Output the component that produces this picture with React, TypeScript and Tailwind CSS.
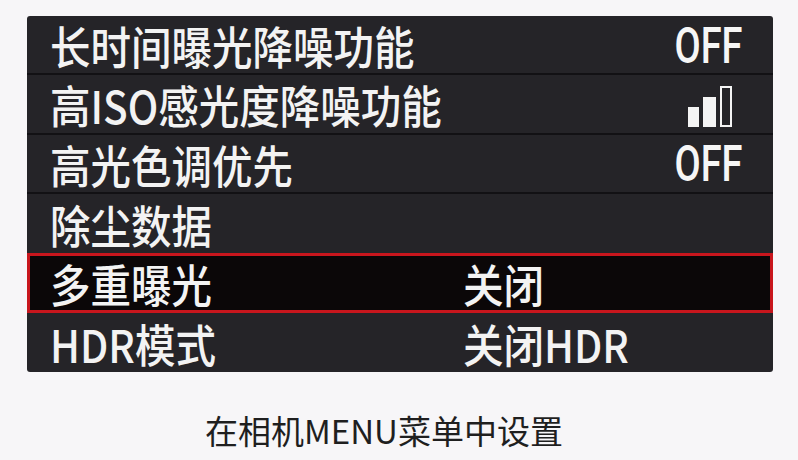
type Row = {
  label: string;
  value?: string;
  kind?: "off" | "text" | "level";
  selected?: boolean;
};

const rows: Row[] = [
  { label: "长时间曝光降噪功能", value: "OFF", kind: "off" },
  { label: "高ISO感光度降噪功能", kind: "level" },
  { label: "高光色调优先", value: "OFF", kind: "off" },
  { label: "除尘数据" },
  { label: "多重曝光", value: "关闭", kind: "text", selected: true },
  { label: "HDR模式", value: "关闭HDR", kind: "text" },
];

const cjk = { fontFamily: '"Noto Sans CJK SC", "Noto Sans", sans-serif' };

function LevelBars() {
  // two filled bars and one empty outline, like the camera's strength meter
  return (
    <div className="flex items-end gap-[4px] h-[41px]">
      <div className="w-[11px] h-[20px] bg-[#f4f4f4]" />
      <div className="w-[13px] h-[30px] bg-[#f4f4f4]" />
      <div className="w-[12px] h-[41px] border-2 border-[#f4f4f4]" />
    </div>
  );
}

function MenuRow({ row, last }: { row: Row; last: boolean }) {
  const base = row.selected
    ? "border-[3px] border-[#c8161d] bg-[#0b0708] pl-[20px]"
    : `${last ? "" : "border-b-2 border-[#121114]"} pl-[23px]`;

  return (
    <div className={`h-[59.33px] grid grid-cols-[413px_1fr] items-center pr-[30px] ${base}`}>
      <span
        className="text-[40.5px] leading-none font-medium text-[#f3f3f3] whitespace-nowrap pt-[3px] scale-y-[1.12] origin-center"
        style={cjk}
      >
        {row.label}
      </span>
      {row.kind === "off" && (
        <span
          className="justify-self-end inline-block text-[50px] leading-none font-medium text-[#f6f6f6] scale-x-[0.76] origin-right pt-[2px]"
          style={{ fontFamily: "Roboto, sans-serif" }}
        >
          {row.value}
        </span>
      )}
      {row.kind === "level" && (
        <div className="justify-self-end pt-[6px] pr-[11px]">
          <LevelBars />
        </div>
      )}
      {row.kind === "text" && (
        <span
          className="text-[40.5px] leading-none font-medium text-[#f3f3f3] whitespace-nowrap pt-[3px] scale-y-[1.12] origin-center"
          style={cjk}
        >
          {row.value}
        </span>
      )}
    </div>
  );
}

export default function App() {
  return (
    <div className="w-[798px] h-[460px] bg-[#f7f6f8] pt-[16px] overflow-hidden">
      <div className="ml-[27px] w-[746px] h-[356px] bg-[#252428] rounded-[3px] flex flex-col">
        {rows.map((row, i) => (
          <MenuRow key={row.label} row={row} last={i === rows.length - 1 || rows[i + 1]?.selected === true} />
        ))}
      </div>
      <p className="mt-[42px] pl-[205px] text-[33px] leading-none text-[#1f1f1f]" style={cjk}>
        在相机MENU菜单中设置
      </p>
    </div>
  );
}
